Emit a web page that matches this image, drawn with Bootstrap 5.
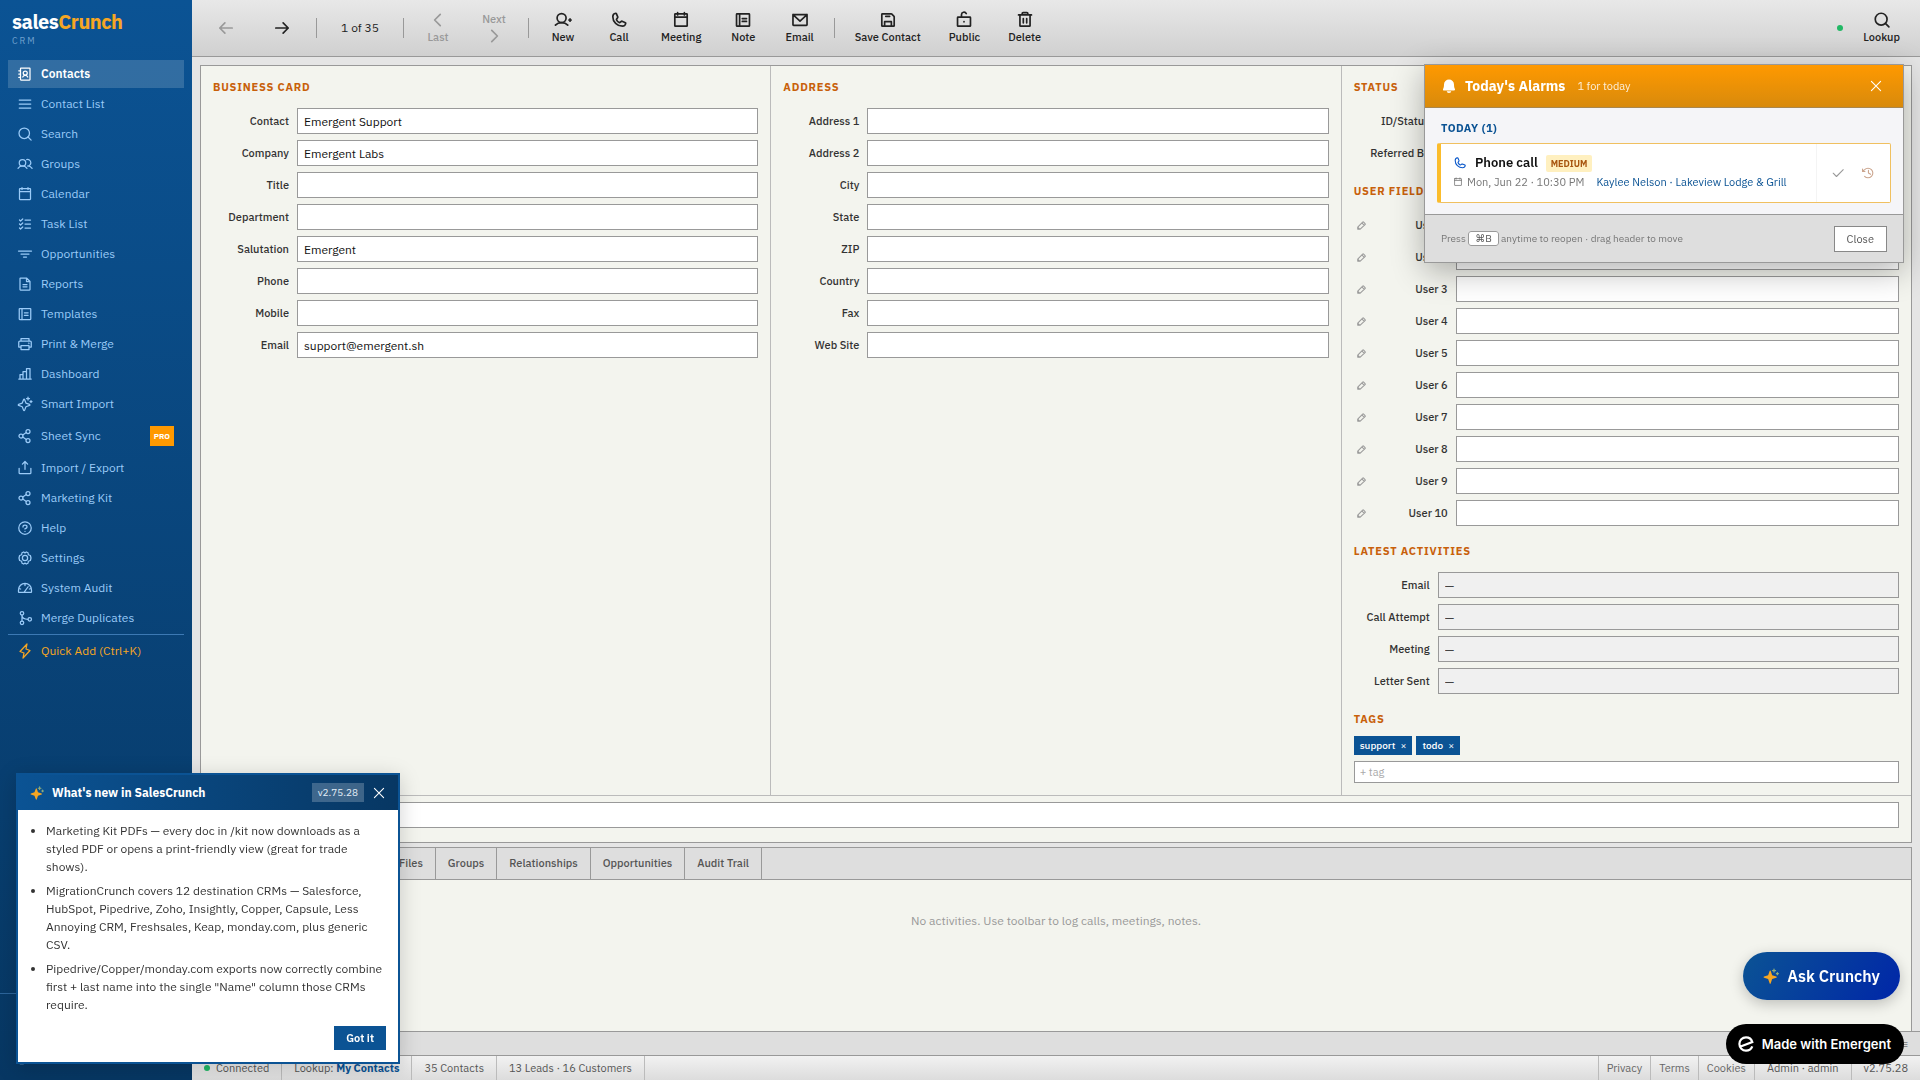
<!DOCTYPE html>
<html lang="en">
<head>
<meta charset="utf-8">
<meta name="viewport" content="width=device-width, initial-scale=1">
<title>salesCrunch CRM</title>
<link href="https://cdn.jsdelivr.net/npm/bootstrap@5.3.0/dist/css/bootstrap.min.css" rel="stylesheet">
<style>
:root{--navy:#0b5394;--deep:#073763;--line:#999;--soft:#bbb;--paper:#f3f4ee;--amber:#ff9900}
body{font-family:"IBM Plex Sans",Inter,"Noto Sans",sans-serif;font-size:12px;line-height:18px;color:#333;background:#e5e5e5}
.ico{width:16px;height:16px;fill:none;stroke:currentColor;stroke-width:20;stroke-linecap:round;stroke-linejoin:round;flex:none}
.bold-ico{width:18px;height:18px;stroke-width:24}
.ico-14{width:14px;height:14px}
.ico-10{width:10px;height:10px}
.min-w-0{min-width:0}

.side{width:192px;background:linear-gradient(#0b5394,#073763);color:#9fc5e8}
.brand{padding:10px 12px 12px}
.brand-name{font-size:20px;line-height:24px;font-weight:700;letter-spacing:-.5px;color:#fff}
.brand-name b{color:#f6a623}
.brand-sub{font-size:9px;line-height:14px;letter-spacing:2px;opacity:.7}
.side-nav{padding:0 8px;gap:2px}
.side-nav a,.side-end a{display:flex;align-items:center;gap:8px;padding:5px 10px 5px 9px;color:#9bcbf8;text-decoration:none}
.side-nav a.active{background:rgba(255,255,255,.16);color:#fff;font-weight:600}
.pro{margin-left:auto;background:var(--amber);color:#fff;font-size:8px;font-weight:700;line-height:12px;padding:4px}
.side-nav a.sync{padding-top:6px;padding-bottom:6px}
.side-nav .quick{border-top:1px solid #3c79b4;color:#f6a623;padding-top:7px}
.side-end{border-top:1px solid #2c659b;padding:50px 8px 8px}

.tools{height:57px;padding:0 8px;gap:4px;background:linear-gradient(#e8e8e8,#d0d0d0);border-bottom:1px solid var(--line)}
.tool{border:0;background:none;min-width:52px;padding:2px 12px;color:#222;font-size:11px;line-height:16px;font-weight:500;display:flex;flex-direction:column;align-items:center;white-space:nowrap}
.tool:disabled{color:#999}
.sep{width:1px;height:20px;background:#999;margin:0 4px}
.pos{min-width:70px;text-align:center;color:#222}
.dot{width:6px;height:6px;border-radius:50%;background:#22b865;flex:none}

.sheet{margin:8px 8px 0;border:1px solid var(--line);background:var(--paper)}
.pane{flex:1 1 0;padding:12px;border-right:1px solid var(--soft)}
.pane:last-child{border-right:0}
.sec{font-size:11px;line-height:18px;font-weight:700;letter-spacing:.8px;color:#c8600a;margin:0 0 12px}
.sec.tight{margin-bottom:8px}
.rows{display:flex;flex-direction:column;gap:6px;margin-bottom:16px}
.rw{display:flex;align-items:center;gap:8px}
.rw label{width:76px;text-align:right;font-size:11px;font-weight:500;color:#333;flex:none;white-space:nowrap}
.rw input,.tagbox{flex:1;min-width:0;height:26px;border:1px solid #999;border-radius:0;background:#fff;padding:1px 6px 0;font-size:12px;color:#111}
.rw input[readonly]{background:#f0f0f0;color:#444;padding-top:0}
.pen{border:0;background:none;padding:0 0 0 2px;width:18px;margin-right:-8px;color:#999;line-height:12px;text-align:left}
.pen .ico{width:11px;height:11px;stroke-width:24}
.tags{gap:4px;margin-bottom:6px}
.tag{background:var(--navy);color:#fff;font-size:10px;line-height:15px;font-weight:500;padding:2px 6px;display:flex;gap:5px}
.tag button{border:0;background:none;color:inherit;padding:0;line-height:15px;font-size:10px}
.tagbox{display:block;width:100%;height:22px;font-size:11px;padding:0 5px}
.tagbox::placeholder{color:#aaa}
.notes-row{border-top:1px solid var(--soft);padding:6px 12px 14px}

.book{margin:4px 8px 0;border:1px solid var(--line);border-bottom:0;background:var(--paper)}
.tabs{padding-left:186px;background:#dedede;border-bottom:1px solid var(--line)}
.tabs button{border:0;border-right:1px solid var(--line);background:none;padding:6px 12px 7px;font-size:11px;font-weight:500;color:#555;line-height:18px}
.empty{padding:32px 0 129px;text-align:center;color:#999}
.hint{height:24px;background:#dedede;border-top:1px solid var(--line);padding:0 12px;font-size:11px;line-height:24px;color:#777;text-align:right}
.foot{height:25px;background:linear-gradient(#f2f2f2,#dcdcdc);border-top:1px solid var(--line);font-size:11px;line-height:24px;color:#555}
.foot>*{border-right:1px solid var(--soft);padding:0 12px;white-space:nowrap}
.foot>*:last-child{border-right:0}
.foot a{color:#666;text-decoration:none;padding:0 8px}
.foot a:first-of-type{border-left:1px solid var(--soft)}
.foot .mine{color:var(--navy);font-weight:700}
.foot .state{gap:6px}

.news{position:fixed;left:16px;bottom:16px;width:384px;border:2px solid var(--navy);background:#fff;box-shadow:0 4px 20px rgba(0,0,0,.18)}
.news-top{background:linear-gradient(90deg,#0b5394,#073763);color:#fff;height:35px;padding:0 12px;gap:8px}
.news-top h2{font-size:12px;line-height:18px;font-weight:700;margin:0}
.ver{background:rgba(255,255,255,.22);font-size:10px;line-height:19px;padding:0 6px;color:#e4eef8}
.plain{border:0;background:none;padding:0;color:inherit;display:flex}
.news ul{margin:0;padding:12px 12px 0 28px}
.news li{margin-bottom:6px}
.news-end{padding:6px 12px 12px}
.gotit{background:var(--navy);color:#fff;border:0;font-size:11px;font-weight:600;line-height:16px;padding:4px 12px}

.alarm{position:fixed;top:64px;right:16px;width:480px;background:#f5f5f8;border:1px solid var(--line);box-shadow:0 8px 30px rgba(0,0,0,.3)}
.alarm-top{background:linear-gradient(#ff9900,#d88a0c);color:#fff;height:43px;padding:0 20px 0 16px;border-bottom:1px solid #a9874f}
.alarm-top h2{font-size:14px;line-height:20px;font-weight:700;margin:0 12px 0 8px}
.alarm-sub{font-size:11px;opacity:.85}
.alarm-body{padding:11px 12px}
.day{font-size:11px;line-height:18px;font-weight:700;letter-spacing:.5px;color:var(--navy);margin:0 0 6px 4px}
.call{border:1px solid #f0c060;border-left:4px solid #fbbc2c;background:#fff;border-radius:2px;height:60px}
.call-main{padding:10px 12px}
.call-title{font-size:13px;font-weight:600;color:#111}
.level{background:#fff0c0;color:#a85510;font-size:9px;font-weight:700;line-height:15px;padding:1px 5px;border-radius:2px;margin-left:8px}
.when{font-size:11px;line-height:20px;color:#777;gap:4px;white-space:nowrap}
.when a{color:var(--navy);text-decoration:none;margin-left:8px}
.call-act{border-left:1px solid #f4f4f4;padding:0 14px;gap:16px;width:74px;color:#999}
.call-act .snooze{color:#cba58e}
.alarm-foot{background:#dedede;border-top:1px solid var(--line);height:48px;padding:0 16px;font-size:10px;color:#777}
.alarm-foot kbd{background:#fff;border:1px solid #999;border-radius:3px;color:#555;padding:0 6px;font:10px/14px "IBM Plex Sans",Inter,sans-serif;margin:0}
.closer{background:#fff;border:1px solid #888;font-size:11px;line-height:16px;padding:4px 12px;color:#555}

.ask{position:fixed;right:20px;bottom:80px;height:48px;border:0;border-radius:24px;padding:0 20px;color:#fff;font-size:16px;font-weight:600;background:linear-gradient(120deg,#0b5394,#0026a8);box-shadow:0 4px 14px rgba(0,0,0,.22)}
.made{position:fixed;right:16px;bottom:16px;height:40px;border-radius:20px;background:#000;color:#fff;font:600 13px/20px Inter,sans-serif;padding:0 13px 0 12px;gap:8px;text-decoration:none}
.made:hover{color:#fff}
</style>
<script src="https://cdn.jsdelivr.net/npm/bootstrap@5.3.0/dist/js/bootstrap.bundle.min.js" defer></script>
</head>
<body>
<svg class="d-none" aria-hidden="true">
<symbol id="book" viewBox="0 0 256 256"><rect x="56" y="32" width="152" height="192" rx="8"/><path d="M28 76h28M28 128h28M28 180h28M92 176a44 44 0 0 1 80 0"/><circle cx="132" cy="112" r="32"/></symbol>
<symbol id="list" viewBox="0 0 256 256"><path d="M36 64h184M36 128h184M36 192h184"/></symbol>
<symbol id="search" viewBox="0 0 256 256"><circle cx="116" cy="116" r="84"/><path d="M176 176l50 50"/></symbol>
<symbol id="users" viewBox="0 0 256 256"><circle cx="88" cy="108" r="52"/><path d="M16 197a88 88 0 0 1 144 0M155 58A52 52 0 1 1 170 160M170 160a88 88 0 0 1 72 37"/></symbol>
<symbol id="cal" viewBox="0 0 256 256"><rect x="40" y="40" width="176" height="176" rx="8"/><path d="M176 24v32M80 24v32M40 88h176"/></symbol>
<symbol id="checks" viewBox="0 0 256 256"><path d="M128 64h88M128 128h88M128 192h88M92 48L57 80 40 64M92 112l-35 32-17-16M92 176l-35 32-17-16"/></symbol>
<symbol id="funnel" viewBox="0 0 256 256"><path d="M24 80h208M64 128h128M104 176h48"/></symbol>
<symbol id="file" viewBox="0 0 256 256"><path d="M200 224H56a8 8 0 0 1-8-8V40a8 8 0 0 1 8-8h96l56 56v128a8 8 0 0 1-8 8zM152 32v56h56M96 136h64M96 172h64"/></symbol>
<symbol id="note" viewBox="0 0 256 256"><rect x="36" y="40" width="184" height="176" rx="8"/><path d="M80 40v176M118 108h60M118 148h60"/></symbol>
<symbol id="print" viewBox="0 0 256 256"><path d="M64 80V40h128v40M64 176H28V96c0-9 8-16 17-16h166c9 0 17 7 17 16v80h-36M64 152h128v64H64z"/><circle cx="188" cy="116" r="4"/></symbol>
<symbol id="chart" viewBox="0 0 256 256"><path d="M152 208V40h56v168M48 208v-72h48M96 208V88h56M28 208h200"/></symbol>
<symbol id="spark" viewBox="0 0 256 256"><path d="M84 172l-58-22a8 8 0 0 1 0-15l58-22 22-58a8 8 0 0 1 15 0l22 58 58 22a8 8 0 0 1 0 15l-58 22-22 58a8 8 0 0 1-15 0zM176 16v48M152 40h48M224 72v32M208 88h32"/></symbol>
<symbol id="share" viewBox="0 0 256 256"><circle cx="64" cy="128" r="32"/><circle cx="176" cy="200" r="32"/><circle cx="176" cy="56" r="32"/><path d="M149 73l-58 38M91 145l58 38"/></symbol>
<symbol id="export" viewBox="0 0 256 256"><path d="M86 66l42-42 42 42M128 148V24M222 132v76a8 8 0 0 1-8 8H42a8 8 0 0 1-8-8v-76"/></symbol>
<symbol id="help" viewBox="0 0 256 256"><circle cx="128" cy="128" r="100"/><path d="M128 144v-8c18 0 32-13 32-28s-14-28-32-28-32 13-32 28v4M128 182v1"/></symbol>
<symbol id="gear" viewBox="0 0 256 256"><circle cx="128" cy="128" r="42"/><path d="M80 44l26-12 22 14 22-14 26 12 6 32 32 12 10 40-10 40-32 12-6 32-26 12-22-14-22 14-26-12-6-32-32-12-10-40 10-40 32-12z"/></symbol>
<symbol id="gauge" viewBox="0 0 256 256"><path d="M24 190v-32a104 104 0 0 1 208 0v32a8 8 0 0 1-8 8H32a8 8 0 0 1-8-8zM112 198l66-90M128 56v32M28 136l30 8M228 136l-30 8"/></symbol>
<symbol id="merge" viewBox="0 0 256 256"><circle cx="80" cy="52" r="28"/><circle cx="80" cy="204" r="28"/><circle cx="204" cy="148" r="28"/><path d="M80 80v96M80 84c0 40 40 64 96 64"/></symbol>
<symbol id="bolt" viewBox="0 0 256 256"><path d="M96 240l16-80-64-24L160 16l-16 80 64 24z"/></symbol>
<symbol id="out" viewBox="0 0 256 256"><path d="M174 86l42 42-42 42M104 128h112M104 216H48a8 8 0 0 1-8-8V48a8 8 0 0 1 8-8h56"/></symbol>
<symbol id="left" viewBox="0 0 256 256"><path d="M216 128H40M112 56l-72 72 72 72"/></symbol>
<symbol id="right" viewBox="0 0 256 256"><path d="M40 128h176M144 56l72 72-72 72"/></symbol>
<symbol id="cleft" viewBox="0 0 256 256"><path d="M160 208l-80-80 80-80"/></symbol>
<symbol id="cright" viewBox="0 0 256 256"><path d="M96 48l80 80-80 80"/></symbol>
<symbol id="useradd" viewBox="0 0 256 256"><circle cx="108" cy="100" r="64"/><path d="M20 200c22-24 52-36 88-36s66 12 88 36M212 128h32M228 112v32"/></symbol>
<symbol id="phone" viewBox="0 0 256 256"><path d="M92.500 124.800a83.600 83.600 0 0 0 39 38.900 8 8 0 0 0 7.900-.6l25-16.700a7.900 7.900 0 0 1 7.600-.7l46.800 20.100a7.900 7.900 0 0 1 4.800 8.300A48 48 0 0 1 176 216 136 136 0 0 1 40 80a48 48 0 0 1 41.900-47.600 7.900 7.900 0 0 1 8.300 4.800l20.100 46.900a8 8 0 0 1-.6 7.500L93 117a8 8 0 0 0-.5 7.800z"/></symbol>
<symbol id="mail" viewBox="0 0 256 256"><path d="M28 52h200v144a8 8 0 0 1-8 8H36a8 8 0 0 1-8-8zM228 52l-100 92L28 52"/></symbol>
<symbol id="save" viewBox="0 0 256 256"><path d="M216 83v125a8 8 0 0 1-8 8H48a8 8 0 0 1-8-8V48a8 8 0 0 1 8-8h125l6 2 35 35zM80 216v-64h96v64M152 76H96"/></symbol>
<symbol id="lock" viewBox="0 0 256 256"><rect x="36" y="88" width="184" height="128" rx="8"/><path d="M92 88V52a36 36 0 0 1 68-16M128 150v4"/></symbol>
<symbol id="trash" viewBox="0 0 256 256"><path d="M220 56H36M104 108v60M152 108v60M200 56v152a8 8 0 0 1-8 8H64a8 8 0 0 1-8-8V56M168 56V36a12 12 0 0 0-12-12h-56a12 12 0 0 0-12 12v20"/></symbol>
<symbol id="pencil" viewBox="0 0 256 256"><path d="M92 216H48a8 8 0 0 1-8-8v-44l120-120a8 8 0 0 1 12 0l44 44a8 8 0 0 1 0 12zM136 68l56 56M92 216l-52-52"/></symbol>
<symbol id="x" viewBox="0 0 256 256"><path d="M212 44L44 212M212 212L44 44"/></symbol>
<symbol id="tick" viewBox="0 0 256 256"><path d="M224 68L100 192l-60-60"/></symbol>
<symbol id="history" viewBox="0 0 256 256"><path d="M136 80v48l40 24M72 100H28V56M66 190a88 88 0 1 0 0-124L28 100"/></symbol>
<symbol id="stars" viewBox="0 0 256 256"><path fill="#f6a623" stroke="none" d="M82 176l-64-22a9 9 0 0 1 0-18l64-22 24-66a9 9 0 0 1 18 0l22 66 66 22a9 9 0 0 1 0 18l-66 22-22 66a9 9 0 0 1-18 0z"/><path stroke="#8fae7c" d="M176 16v48M152 40h48M230 74v32M214 90h32"/></symbol>
</svg>

<div class="d-flex vh-100 overflow-hidden">
  <aside class="side d-flex flex-column flex-shrink-0">
    <div class="brand"><div class="brand-name">sales<b>Crunch</b></div><div class="brand-sub">CRM</div></div>
    <nav class="side-nav d-flex flex-column">
      <a href="#" class="active"><svg class="ico"><use href="#book"/></svg>Contacts</a>
      <a href="#"><svg class="ico"><use href="#list"/></svg>Contact List</a>
      <a href="#"><svg class="ico"><use href="#search"/></svg>Search</a>
      <a href="#"><svg class="ico"><use href="#users"/></svg>Groups</a>
      <a href="#"><svg class="ico"><use href="#cal"/></svg>Calendar</a>
      <a href="#"><svg class="ico"><use href="#checks"/></svg>Task List</a>
      <a href="#"><svg class="ico"><use href="#funnel"/></svg>Opportunities</a>
      <a href="#"><svg class="ico"><use href="#file"/></svg>Reports</a>
      <a href="#"><svg class="ico"><use href="#note"/></svg>Templates</a>
      <a href="#"><svg class="ico"><use href="#print"/></svg>Print &amp; Merge</a>
      <a href="#"><svg class="ico"><use href="#chart"/></svg>Dashboard</a>
      <a href="#"><svg class="ico"><use href="#spark"/></svg>Smart Import</a>
      <a href="#" class="sync"><svg class="ico"><use href="#share"/></svg>Sheet Sync<span class="pro">PRO</span></a>
      <a href="#"><svg class="ico"><use href="#export"/></svg>Import / Export</a>
      <a href="#"><svg class="ico"><use href="#share"/></svg>Marketing Kit</a>
      <a href="#"><svg class="ico"><use href="#help"/></svg>Help</a>
      <a href="#"><svg class="ico"><use href="#gear"/></svg>Settings</a>
      <a href="#"><svg class="ico"><use href="#gauge"/></svg>System Audit</a>
      <a href="#"><svg class="ico"><use href="#merge"/></svg>Merge Duplicates</a>
      <a href="#" class="quick"><svg class="ico"><use href="#bolt"/></svg>Quick Add (Ctrl+K)</a>
    </nav>
    <div class="side-end mt-auto"><a href="#"><svg class="ico"><use href="#out"/></svg>Logout</a></div>
  </aside>

  <div class="d-flex flex-column flex-grow-1 min-w-0">
    <header class="tools d-flex align-items-center flex-shrink-0">
      <button class="tool" disabled aria-label="Back"><svg class="ico bold-ico"><use href="#left"/></svg></button>
      <button class="tool" aria-label="Forward"><svg class="ico bold-ico"><use href="#right"/></svg></button>
      <span class="sep"></span><span class="pos">1 of 35</span><span class="sep"></span>
      <button class="tool" disabled><svg class="ico bold-ico"><use href="#cleft"/></svg>Last</button>
      <button class="tool" disabled>Next<svg class="ico bold-ico"><use href="#cright"/></svg></button>
      <span class="sep"></span>
      <button class="tool"><svg class="ico bold-ico"><use href="#useradd"/></svg>New</button>
      <button class="tool"><svg class="ico bold-ico"><use href="#phone"/></svg>Call</button>
      <button class="tool"><svg class="ico bold-ico"><use href="#cal"/></svg>Meeting</button>
      <button class="tool"><svg class="ico bold-ico"><use href="#note"/></svg>Note</button>
      <button class="tool"><svg class="ico bold-ico"><use href="#mail"/></svg>Email</button>
      <span class="sep"></span>
      <button class="tool"><svg class="ico bold-ico"><use href="#save"/></svg>Save Contact</button>
      <button class="tool"><svg class="ico bold-ico"><use href="#lock"/></svg>Public</button>
      <button class="tool"><svg class="ico bold-ico"><use href="#trash"/></svg>Delete</button>
      <span class="dot ms-auto me-1"></span>
      <button class="tool"><svg class="ico bold-ico"><use href="#search"/></svg>Lookup</button>
    </header>

    <section class="sheet">
      <div class="d-flex">
        <div class="pane">
          <h2 class="sec">BUSINESS CARD</h2>
          <div class="rows">
            <div class="rw"><label for="b1">Contact</label><input id="b1" value="Emergent Support"></div>
            <div class="rw"><label for="b2">Company</label><input id="b2" value="Emergent Labs"></div>
            <div class="rw"><label for="b3">Title</label><input id="b3"></div>
            <div class="rw"><label for="b4">Department</label><input id="b4"></div>
            <div class="rw"><label for="b5">Salutation</label><input id="b5" value="Emergent"></div>
            <div class="rw"><label for="b6">Phone</label><input id="b6"></div>
            <div class="rw"><label for="b7">Mobile</label><input id="b7"></div>
            <div class="rw"><label for="b8">Email</label><input id="b8" value="support@emergent.sh"></div>
          </div>
        </div>
        <div class="pane">
          <h2 class="sec">ADDRESS</h2>
          <div class="rows">
            <div class="rw"><label for="a1">Address 1</label><input id="a1"></div>
            <div class="rw"><label for="a2">Address 2</label><input id="a2"></div>
            <div class="rw"><label for="a3">City</label><input id="a3"></div>
            <div class="rw"><label for="a4">State</label><input id="a4"></div>
            <div class="rw"><label for="a5">ZIP</label><input id="a5"></div>
            <div class="rw"><label for="a6">Country</label><input id="a6"></div>
            <div class="rw"><label for="a7">Fax</label><input id="a7"></div>
            <div class="rw"><label for="a8">Web Site</label><input id="a8"></div>
          </div>
        </div>
        <div class="pane">
          <h2 class="sec">STATUS</h2>
          <div class="rows">
            <div class="rw"><label for="s1">ID/Status</label><input id="s1"></div>
            <div class="rw"><label for="s2">Referred By</label><input id="s2"></div>
          </div>
          <h2 class="sec">USER FIELDS</h2>
          <div class="rows">
            <div class="rw"><button class="pen" aria-label="Rename field 1"><svg class="ico"><use href="#pencil"/></svg></button><label for="u1">User 1</label><input id="u1"></div>
            <div class="rw"><button class="pen" aria-label="Rename field 2"><svg class="ico"><use href="#pencil"/></svg></button><label for="u2">User 2</label><input id="u2"></div>
            <div class="rw"><button class="pen" aria-label="Rename field 3"><svg class="ico"><use href="#pencil"/></svg></button><label for="u3">User 3</label><input id="u3"></div>
            <div class="rw"><button class="pen" aria-label="Rename field 4"><svg class="ico"><use href="#pencil"/></svg></button><label for="u4">User 4</label><input id="u4"></div>
            <div class="rw"><button class="pen" aria-label="Rename field 5"><svg class="ico"><use href="#pencil"/></svg></button><label for="u5">User 5</label><input id="u5"></div>
            <div class="rw"><button class="pen" aria-label="Rename field 6"><svg class="ico"><use href="#pencil"/></svg></button><label for="u6">User 6</label><input id="u6"></div>
            <div class="rw"><button class="pen" aria-label="Rename field 7"><svg class="ico"><use href="#pencil"/></svg></button><label for="u7">User 7</label><input id="u7"></div>
            <div class="rw"><button class="pen" aria-label="Rename field 8"><svg class="ico"><use href="#pencil"/></svg></button><label for="u8">User 8</label><input id="u8"></div>
            <div class="rw"><button class="pen" aria-label="Rename field 9"><svg class="ico"><use href="#pencil"/></svg></button><label for="u9">User 9</label><input id="u9"></div>
            <div class="rw"><button class="pen" aria-label="Rename field 10"><svg class="ico"><use href="#pencil"/></svg></button><label for="u10">User 10</label><input id="u10"></div>
          </div>
          <h2 class="sec">LATEST ACTIVITIES</h2>
          <div class="rows">
            <div class="rw"><label for="l1">Email</label><input id="l1" readonly value="—"></div>
            <div class="rw"><label for="l2">Call Attempt</label><input id="l2" readonly value="—"></div>
            <div class="rw"><label for="l3">Meeting</label><input id="l3" readonly value="—"></div>
            <div class="rw"><label for="l4">Letter Sent</label><input id="l4" readonly value="—"></div>
          </div>
          <h2 class="sec tight">TAGS</h2>
          <div class="tags d-flex">
            <span class="tag">support<button aria-label="Remove support">×</button></span>
            <span class="tag">todo<button aria-label="Remove todo">×</button></span>
          </div>
          <input class="tagbox" placeholder="+ tag" aria-label="Add a tag">
        </div>
      </div>
      <div class="notes-row rw"><label for="n1"></label><input id="n1"></div>
    </section>

    <section class="book flex-grow-1 overflow-hidden">
      <div class="tabs d-flex">
        <button>Files</button><button>Groups</button><button>Relationships</button><button>Opportunities</button><button>Audit Trail</button>
      </div>
      <div class="empty">No activities. Use toolbar to log calls, meetings, notes.</div>
    </section>
    <div class="hint flex-shrink-0">≡</div>
    <footer class="foot d-flex flex-shrink-0">
      <span class="state d-flex align-items-center"><i class="dot"></i>Connected</span>
      <span>Lookup: <span class="mine">My Contacts</span></span>
      <span>35 Contacts</span>
      <span>13 Leads · 16 Customers</span>
      <a href="#" class="ms-auto">Privacy</a><a href="#">Terms</a><a href="#">Cookies</a>
      <span>Admin · admin</span><span>v2.75.28</span>
    </footer>
  </div>
</div>

<section class="news" aria-label="What's new">
  <div class="news-top d-flex align-items-center">
    <svg class="ico ico-14"><use href="#stars"/></svg><h2 class="flex-grow-1">What's new in SalesCrunch</h2>
    <span class="ver">v2.75.28</span><button class="plain" aria-label="Dismiss"><svg class="ico ico-14"><use href="#x"/></svg></button>
  </div>
  <ul>
    <li>Marketing Kit PDFs — every doc in /kit now downloads as a styled PDF or opens a print-friendly view (great for trade shows).</li>
    <li>MigrationCrunch covers 12 destination CRMs — Salesforce, HubSpot, Pipedrive, Zoho, Insightly, Copper, Capsule, Less Annoying CRM, Freshsales, Keap, monday.com, plus generic CSV.</li>
    <li>Pipedrive/Copper/monday.com exports now correctly combine first + last name into the single "Name" column those CRMs require.</li>
  </ul>
  <div class="news-end d-flex justify-content-end"><button class="gotit">Got it</button></div>
</section>

<section class="alarm" aria-label="Today's Alarms">
  <div class="alarm-top d-flex align-items-center">
    <svg width="16" height="16" viewBox="0 0 256 256" fill="#fff"><path d="M222 192a14 14 0 0 1-12 8H46c-14 0-18-16-12-26 8-14 14-36 14-70a80 80 0 0 1 160 0c0 34 6 56 14 70a16 16 0 0 1 0 18zM92 212h72a36 28 0 0 1-72 0z"/></svg>
    <h2>Today's Alarms</h2><span class="alarm-sub">1 for today</span>
    <button class="plain ms-auto" aria-label="Close alarms"><svg class="ico ico-14"><use href="#x"/></svg></button>
  </div>
  <div class="alarm-body">
    <h3 class="day">TODAY (1)</h3>
    <div class="call d-flex">
      <div class="call-main flex-grow-1">
        <div class="d-flex align-items-center"><svg class="ico ico-14 me-2 text-primary-emphasis"><use href="#phone"/></svg><span class="call-title">Phone call</span><span class="level">MEDIUM</span></div>
        <div class="when d-flex align-items-center"><svg class="ico ico-10"><use href="#cal"/></svg><span>Mon, Jun 22 · 10:30 PM</span><a href="#">Kaylee Nelson · Lakeview Lodge &amp; Grill</a></div>
      </div>
      <div class="call-act d-flex align-items-center">
        <button class="plain" aria-label="Done"><svg class="ico ico-14"><use href="#tick"/></svg></button>
        <button class="plain snooze" aria-label="Snooze"><svg class="ico ico-14"><use href="#history"/></svg></button>
      </div>
    </div>
  </div>
  <div class="alarm-foot d-flex align-items-center justify-content-between"><span>Press <kbd>⌘B</kbd> anytime to reopen · drag header to move</span><button class="closer">Close</button></div>
</section>

<button class="ask d-flex align-items-center gap-2"><svg class="ico"><use href="#stars"/></svg>Ask Crunchy</button>
<a href="#" class="made d-flex align-items-center"><svg width="16" height="16" viewBox="0 0 16 16" fill="none" stroke="#fff" stroke-width="2.200"><path d="M2.600 10.600L14.300 6C13.500 3.300 11 1.400 8 1.400 4.200 1.400 1.400 4.400 1.400 8c0 3.700 2.900 6.600 6.600 6.600 2.900 0 5.300-1.700 6.300-4.300"/></svg>Made with Emergent</a>
</body>
</html>
